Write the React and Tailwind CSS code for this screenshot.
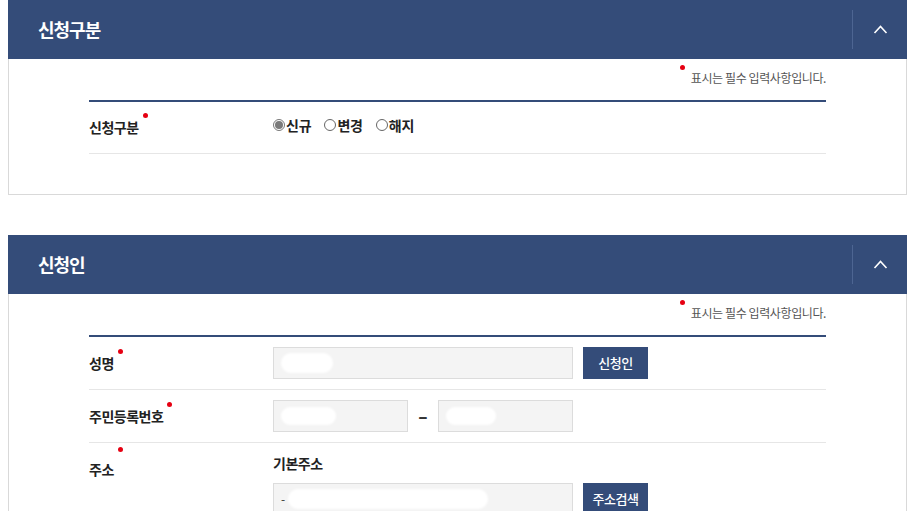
import { useState } from 'react';

const font = { fontFamily: '"Noto Sans CJK KR", "Noto Sans", sans-serif' };

const RequiredDot = () => (
  <span className="relative -top-[12px] ml-[4px] inline-block h-[5px] w-[5px] rounded-full bg-[#e60012]"></span>
);

const Blob = ({ className }) => (
  <div className={`rounded-full bg-white blur-[1px] ${className}`}></div>
);

// Section header + body
const Section = ({ title, children }) => {
  const [open, setOpen] = useState(true);
  return (
    <section className="mb-[40px]">
      <div className="flex h-[59px] items-center justify-between bg-[#344c79] pl-[30px]">
        <h2 className="text-[18px] font-bold tracking-[-1px] text-white">{title}</h2>
        <button
          onClick={() => setOpen(!open)}
          className="flex h-[39px] w-[55px] items-center justify-center border-l border-[#4d6592]"
        >
          <svg width="15" height="9" viewBox="0 0 15 9" fill="none">
            <polyline points="1.5,8 7.5,1.5 13.5,8" stroke="white" strokeWidth="1.6" />
          </svg>
        </button>
      </div>
      {open && (
        <div className="border border-t-0 border-[#d9d9d9] px-[80px]">
          <p className="flex justify-end pt-[11px] text-[12px] leading-[16px] tracking-[-0.4px] text-[#555]">
            <span className="relative -top-[5px] mr-[6px] inline-block h-[5px] w-[5px] rounded-full bg-[#e60012]"></span>
            표시는 필수 입력사항입니다.
          </p>
          <div className="mt-[14px] h-[2px] bg-[#344c79]"></div>
          {children}
        </div>
      )}
    </section>
  );
};

const Row = ({ label, children, className = '' }) => (
  <div className={`flex border-b border-[#e6e6e6] ${className}`}>
    <div className="flex w-[184px] shrink-0 items-center text-[14px] font-bold tracking-[-0.5px] text-[#222]">
      {label}
      <RequiredDot />
    </div>
    <div className="flex-1">{children}</div>
  </div>
);

const Radio = ({ label, checked, onChange }) => (
  <label className="mr-[13px] flex cursor-pointer items-center text-[14px] font-bold tracking-[-0.2px] text-[#222]">
    <span
      className={`mr-[1px] flex h-[12px] w-[12px] items-center justify-center rounded-full border ${
        checked ? 'border-[#777]' : 'border-[#666]'
      }`}
    >
      {checked && <span className="h-[8px] w-[8px] rounded-full bg-[#7a7a7a]"></span>}
    </span>
    <input type="radio" className="hidden" checked={checked} onChange={onChange} />
    {label}
  </label>
);

const Field = ({ className = '', children }) => (
  <div className={`flex h-[32px] items-center border border-[#dcdcdc] bg-[#f4f4f4] px-[7px] ${className}`}>
    {children}
  </div>
);

const Btn = ({ children }) => (
  <button className="ml-[10px] h-[32px] w-[65px] bg-[#344c79] text-[13px] font-medium tracking-[-0.5px] text-white">
    {children}
  </button>
);

const App = () => {
  const [type, setType] = useState('new');
  const options = [
    { key: 'new', label: '신규' },
    { key: 'change', label: '변경' },
    { key: 'cancel', label: '해지' },
  ];

  return (
    <div className="w-[911px] overflow-hidden px-[8px] pr-[4px]" style={font}>
      <Section title="신청구분">
        <Row label="신청구분" className="h-[52px]">
          <div className="flex h-full items-center pb-[5px]">
            {options.map((o) => (
              <Radio key={o.key} label={o.label} checked={type === o.key} onChange={() => setType(o.key)} />
            ))}
          </div>
        </Row>
        <div className="h-[40px]"></div>
      </Section>

      <Section title="신청인">
        <Row label="성명" className="py-[10px]">
          <div className="flex items-center">
            <Field className="w-[300px]">
              <Blob className="h-[20px] w-[52px]" />
            </Field>
            <Btn>신청인</Btn>
          </div>
        </Row>
        <Row label="주민등록번호" className="py-[10px]">
          <div className="flex items-center">
            <Field className="w-[135px]">
              <Blob className="h-[18px] w-[55px]" />
            </Field>
            <span className="flex w-[30px] justify-center text-[17px] font-black text-[#333]">–</span>
            <Field className="w-[135px]">
              <Blob className="h-[18px] w-[50px]" />
            </Field>
          </div>
        </Row>
        <Row label="주소" className="items-start pt-[12px] [&>div:first-child]:items-start [&>div:first-child]:pt-[4px]">
          <div>
            <p className="mb-[12px] text-[14px] font-bold leading-[16px] tracking-[-0.5px] text-[#222]">기본주소</p>
            <div className="flex items-center">
              <Field className="w-[300px]">
                <span className="text-[12px] text-[#333]">-</span>
                <Blob className="ml-[3px] h-[20px] w-[200px]" />
              </Field>
              <Btn>주소검색</Btn>
            </div>
            <div className="h-[40px]"></div>
          </div>
        </Row>
      </Section>
    </div>
  );
};

export default App;
